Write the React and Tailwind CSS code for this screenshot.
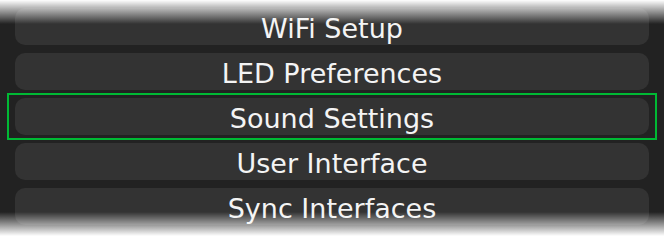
import React from "react";

const ITEMS = ["WiFi Setup", "LED Preferences", "Sound Settings", "User Interface", "Sync Interfaces"];
const SELECTED = 2;

function MenuButton({ label }) {
  return (
    <div className="h-[37px] rounded-[10px] bg-[#333333] flex items-center justify-center pt-[3px] text-[27px] leading-none text-[#f4f4f4] font-['DejaVu_Sans',Verdana,sans-serif]">
      {label}
    </div>
  );
}

export default function App() {
  return (
    <div className="relative w-[664px] h-[236px] overflow-hidden bg-[#222222]">
      <div className="flex flex-col gap-[8px] pt-[8px] px-[15px]">
        {ITEMS.map((label, i) =>
          i === SELECTED ? (
            <div key={label} className="-mx-[8px] -my-[5px] px-[6px] py-[3px] border-2 border-[#00b934]">
              <MenuButton label={label} />
            </div>
          ) : (
            <MenuButton key={label} label={label} />
          )
        )}
      </div>
      {/* scroll fades */}
      <div className="absolute inset-x-0 top-0 h-[24px] bg-gradient-to-b from-white to-transparent pointer-events-none" />
      <div className="absolute inset-x-0 bottom-0 h-[24px] bg-gradient-to-t from-white to-transparent pointer-events-none" />
    </div>
  );
}
